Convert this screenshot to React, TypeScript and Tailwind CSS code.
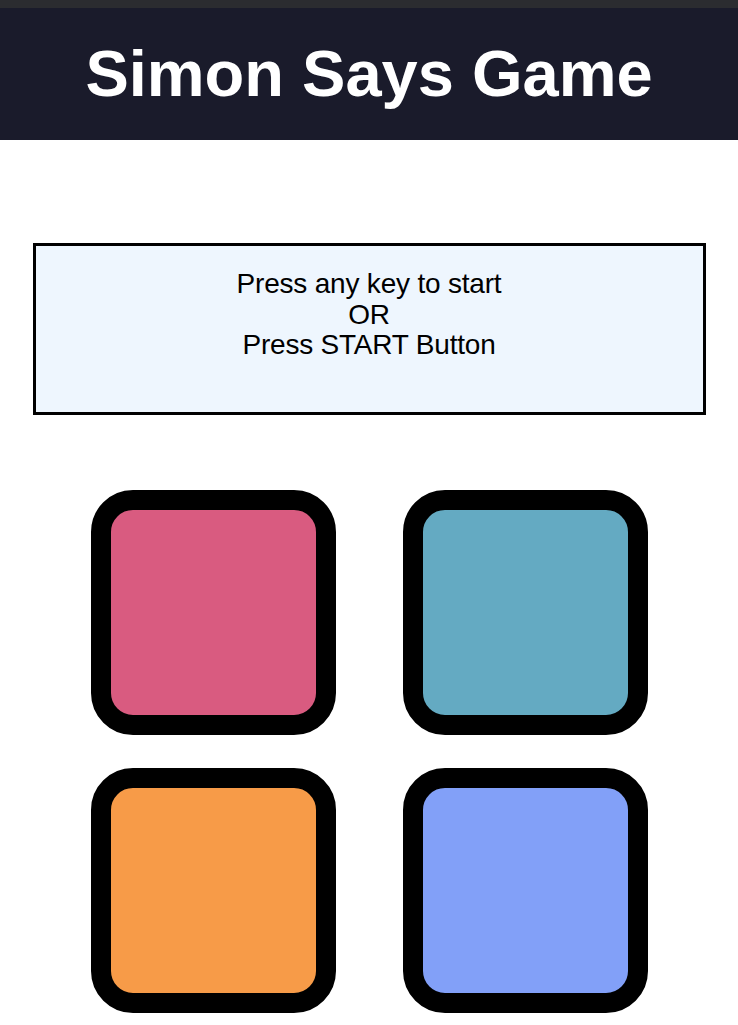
const pads = [
  { id: "red", color: "bg-[#d95b80]" },
  { id: "teal", color: "bg-[#64aac2]" },
  { id: "orange", color: "bg-[#f79b48]" },
  { id: "blue", color: "bg-[#82a0f8]" },
];

export default function App() {
  return (
    <div className="min-h-screen bg-white font-['Liberation_Sans',Arial,sans-serif]">
      <div className="h-2 bg-[#2b2c30]" />
      <header className="h-[132px] bg-[#1a1b2b] flex items-center justify-center">
        <h1 className="text-white text-[65px] font-bold">Simon Says Game</h1>
      </header>

      <main className="flex flex-col items-center pt-[103px]">
        <div className="w-[673px] h-[172px] border-[3px] border-black bg-[#eef6fe] pt-[23px] text-center text-black text-[28px] leading-[30.5px] tracking-[-0.2px]">
          <p>Press any key to start</p>
          <p>OR</p>
          <p>Press START Button</p>
        </div>

        <div className="grid grid-cols-2 gap-x-[67px] gap-y-[33px] mt-[75px]">
          {pads.map((pad) => (
            <button
              key={pad.id}
              className={`w-[245px] h-[245px] rounded-[42px] border-[20px] border-black ${pad.color}`}
            />
          ))}
        </div>
      </main>
    </div>
  );
}
